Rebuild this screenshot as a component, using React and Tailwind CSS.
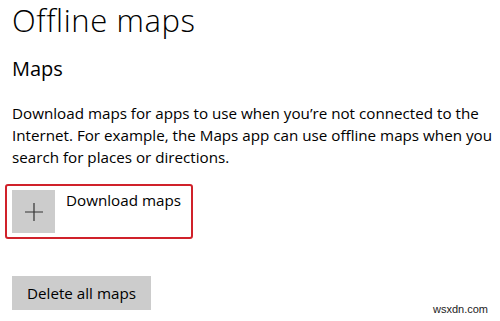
const Plus = () => (
    <svg width="20" height="20" viewBox="0 0 20 20" className="text-[#333]">
        <path d="M10 1v18M1 10h18" stroke="currentColor" strokeWidth="1.2" fill="none" />
    </svg>
);

const App = () => {
    return (
        <div className="w-[500px] h-[321px] bg-white relative overflow-hidden text-black" style={{ fontFamily: '"Segoe UI", "Open Sans", sans-serif' }}>
            <div className="pl-3">
                <h1 className="text-[31px] font-light leading-[42px] -mt-[1px] tracking-[0.6px]">Offline maps</h1>
                <h2 className="text-[20px] font-normal leading-[26px] mt-[15px]">Maps</h2>
                <p className="text-[15.2px] leading-[22px] mt-[20px]">
                    Download maps for apps to use when you’re not connected to the<br />
                    Internet. For example, the Maps app can use offline maps when you<br />
                    search for places or directions.
                </p>
            </div>

            <div className="ml-[5px] mt-[16px] w-[188px] h-[55px] border-2 border-[#d0212a] rounded-[3px] flex items-start pl-[5px] pt-[4px] gap-[11px]">
                <div className="w-[43px] h-[43px] bg-[#cccccc] flex items-center justify-center">
                    <Plus />
                </div>
                <span className="text-[15.2px] leading-[20px]">Download maps</span>
            </div>

            <button className="ml-3 mt-[37px] w-[139px] h-[34px] bg-[#cccccc] text-[15.2px] flex items-center justify-center">
                Delete all maps
            </button>

            <span className="absolute right-[12px] bottom-[4px] text-[11px] text-[#222]" style={{ fontFamily: '"Liberation Sans", sans-serif' }}>wsxdn.com</span>
        </div>
    );
};

export default App;
